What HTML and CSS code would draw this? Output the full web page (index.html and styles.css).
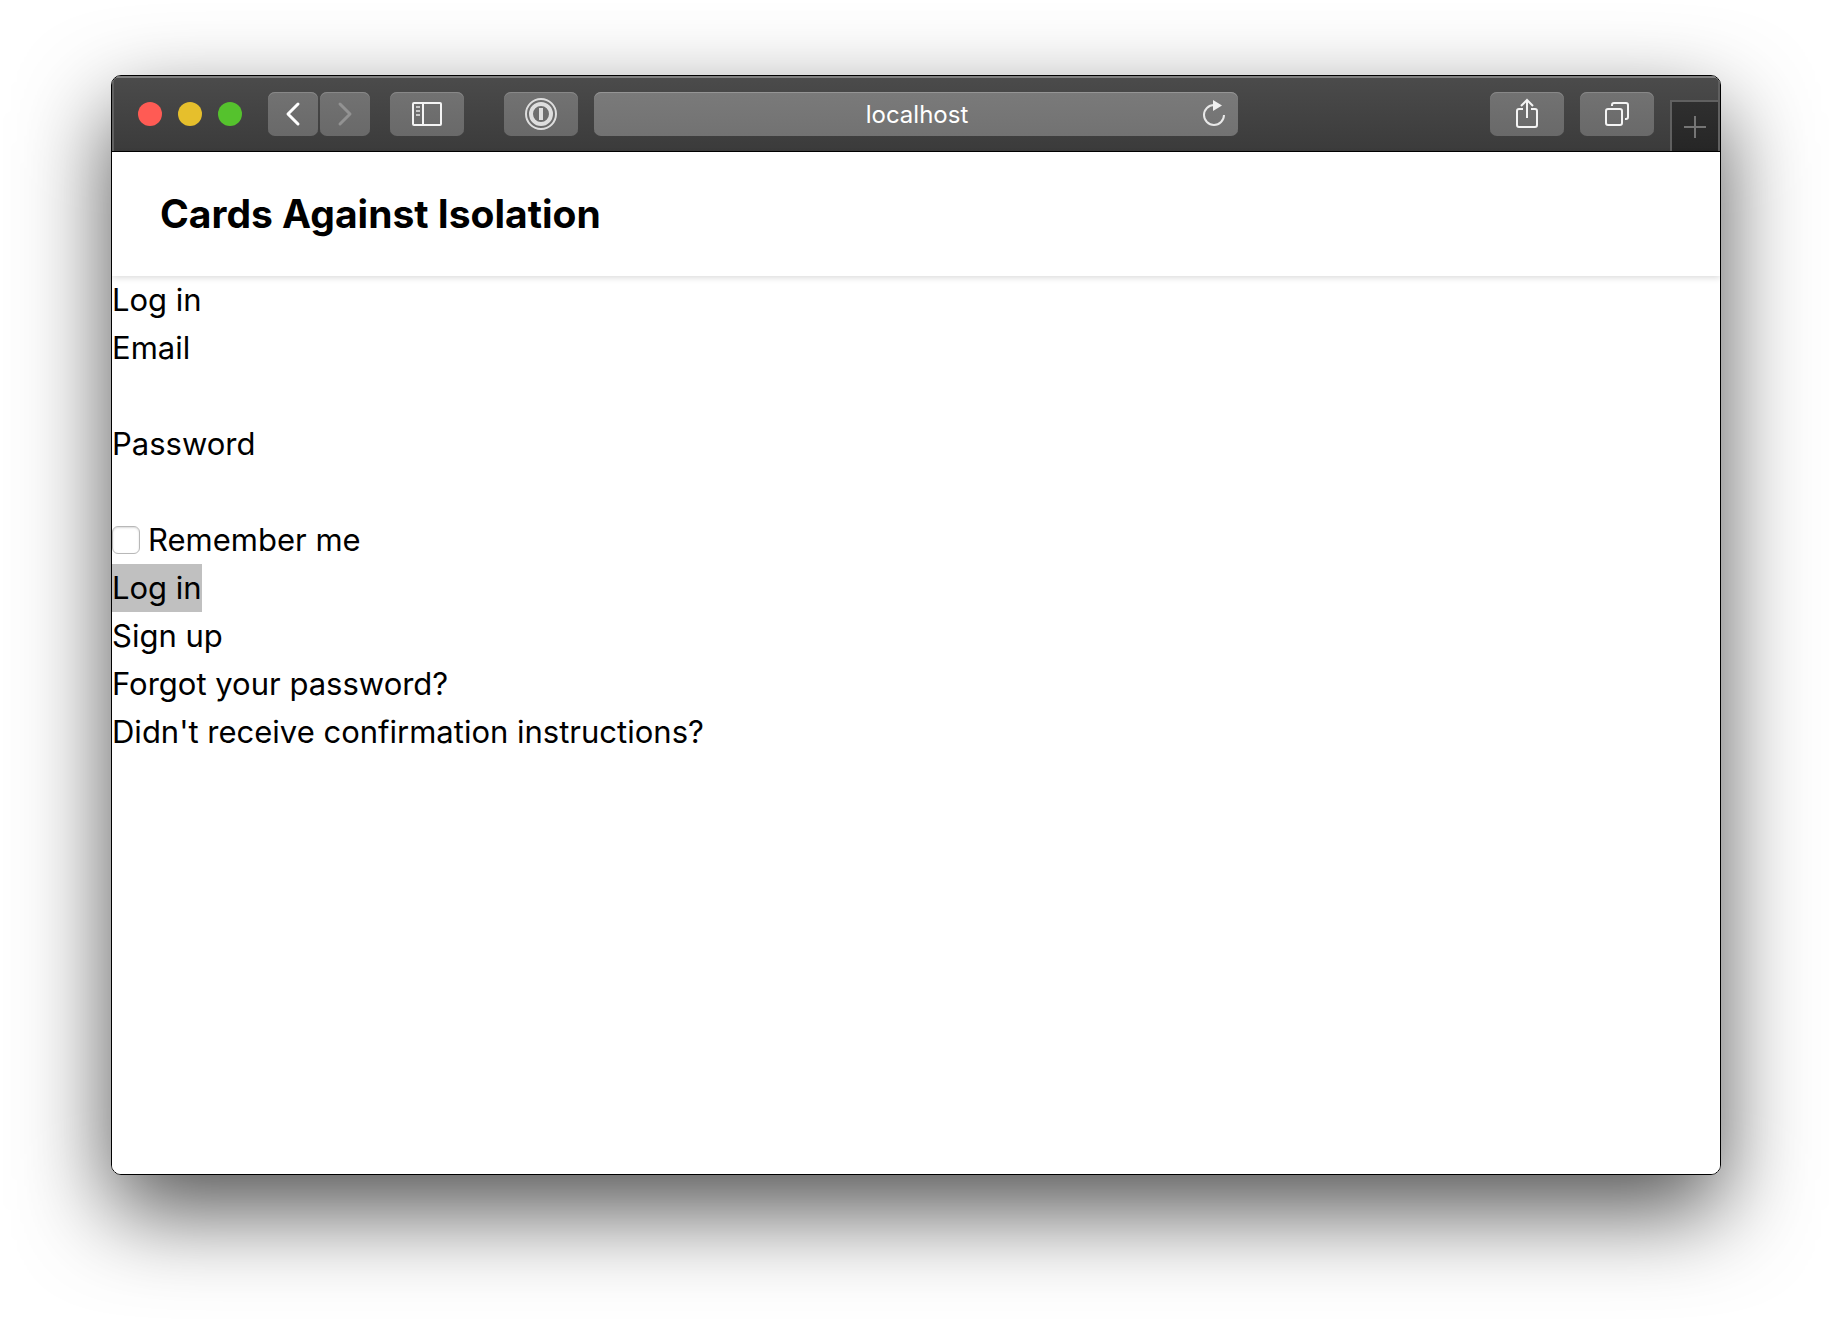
FILE: index.html
```html
<!DOCTYPE html>
<html lang="en">
<head>
    <meta charset="utf-8">
    <title>Cards Against Isolation</title>
    <link rel="stylesheet" href="styles.css">
</head>
<body>
<div class="window">
    <div class="toolbar">
        <div class="toolbar-left">
            <div class="lights">
                <span class="light light-red"></span>
                <span class="light light-yellow"></span>
                <span class="light light-green"></span>
            </div>
            <div class="nav">
                <button type="button" class="tool tool-small" aria-label="Back">
                    <svg width="16" height="26" viewBox="0 0 16 26"><path d="M13 3L3 13l10 10" fill="none" stroke="#fff" stroke-width="3" stroke-linecap="round" stroke-linejoin="round"/></svg>
                </button>
                <button type="button" class="tool tool-small" aria-label="Forward" disabled>
                    <svg width="16" height="26" viewBox="0 0 16 26"><path d="M3 3l10 10L3 23" fill="none" stroke="#929292" stroke-width="3" stroke-linecap="round" stroke-linejoin="round"/></svg>
                </button>
            </div>
            <button type="button" class="tool" aria-label="Sidebar">
                <svg width="30" height="24" viewBox="0 0 30 24">
                    <rect x="1" y="1" width="28" height="22" rx="1" fill="none" stroke="#f4f4f4" stroke-width="2"/>
                    <path d="M11 1v22" stroke="#f4f4f4" stroke-width="2"/>
                    <path d="M4 5h4M4 9h4M4 13h4" stroke="#c8c8c8" stroke-width="2"/>
                </svg>
            </button>
            <button type="button" class="tool tool-last" aria-label="Passwords">
                <svg width="32" height="32" viewBox="0 0 32 32">
                    <circle cx="16" cy="16" r="15" fill="none" stroke="#dedede" stroke-width="2"/>
                    <circle cx="16" cy="16" r="10" fill="none" stroke="#dedede" stroke-width="4"/>
                    <path d="M16 10v12" stroke="#dedede" stroke-width="4"/>
                </svg>
            </button>
        </div>

        <div class="address">
            <input type="text" class="address-input" value="localhost" aria-label="Address">
            <button type="button" class="reload" aria-label="Reload">
                <svg width="24" height="28" viewBox="0 0 24 28">
                    <path d="M12 5A10 10 0 1 0 22 15" fill="none" stroke="#e8e8e8" stroke-width="2"/>
                    <path d="M11 0l9 5.500-9 5.500z" fill="#f0f0f0"/>
                </svg>
            </button>
        </div>

        <div class="toolbar-right">
            <button type="button" class="tool" aria-label="Share">
                <svg width="22" height="32" viewBox="0 0 22 32" fill="none" stroke="#f4f4f4" stroke-width="2">
                    <path d="M7 11H3q-2 0-2 2v14q0 2 2 2h16q2 0 2-2V13q0-2-2-2h-4"/>
                    <path d="M11 20V2M5 8l6-6 6 6"/>
                </svg>
            </button>
            <button type="button" class="tool" aria-label="Show all tabs">
                <svg width="24" height="24" viewBox="0 0 24 24" fill="none" stroke="#f4f4f4" stroke-width="2">
                    <rect x="1" y="7" width="16" height="16" rx="2"/>
                    <path d="M7 4V3q0-2 2-2h12q2 0 2 2v12q0 2-2 2h-1"/>
                </svg>
            </button>
            <button type="button" class="new-tab" aria-label="New tab">
                <svg width="22" height="22" viewBox="0 0 22 22"><path d="M11 0v22M0 11h22" stroke="#757575" stroke-width="2"/></svg>
            </button>
        </div>
    </div>

    <div class="page">
        <header class="site-header">
            <h1>Cards Against Isolation</h1>
        </header>

        <h2>Log in</h2>

        <form class="login-form">
            <label for="email">Email</label>
            <input type="email" id="email" class="field">
            <label for="password">Password</label>
            <input type="password" id="password" class="field">
            <div class="remember">
                <input type="checkbox" id="remember">
                <label for="remember">Remember me</label>
            </div>
            <button type="submit" class="submit">Log in</button>
        </form>

        <nav class="links">
            <a href="#">Sign up</a>
            <a href="#">Forgot your password?</a>
            <a href="#">Didn't receive confirmation instructions?</a>
        </nav>
    </div>
</div>
</body>
</html>
```

FILE: styles.css
```css
* {
    box-sizing: border-box;
    margin: 0;
    padding: 0;
}

body {
    display: flex;
    min-height: 100vh;
    padding: 75px 111px 147px;
    background-color: #fff;
    color: #000;
    font-family: Inter, "Liberation Sans", sans-serif;
    font-size: 31px;
    line-height: 48px;
}

h1, h2, button, input {
    font: inherit;
    color: inherit;
}

button, input {
    border: none;
    background: none;
}

svg {
    display: block;
}

.window {
    flex: 1;
    display: flex;
    flex-direction: column;
    border: 1px solid #000;
    border-radius: 10px;
    overflow: hidden;
    box-shadow: 0 36px 90px rgba(0, 0, 0, 0.68);
}

/* browser toolbar */
.toolbar {
    display: grid;
    grid-template-columns: 3fr 4fr 3fr;
    align-items: center;
    height: 76px;
    border-bottom: 1px solid #000;
    background: linear-gradient(#4b4b4b, #3b3b3b);
    box-shadow: inset 0 2px #808080, inset 2px 0 #606060, inset -2px 0 #606060;
}

.toolbar-left {
    display: flex;
    align-items: center;
    padding-left: 26px;
}

.lights {
    display: flex;
    gap: 16px;
    margin-right: 26px;
}

.light {
    width: 24px;
    height: 24px;
    border-radius: 50%;
}
.light-red { background-color: #ff5b54; }
.light-yellow { background-color: #e6bf2c; }
.light-green { background-color: #55c22d; }

.nav {
    display: flex;
    gap: 2px;
    margin-right: 20px;
}

.tool {
    display: flex;
    align-items: center;
    justify-content: center;
    width: 74px;
    height: 44px;
    border-radius: 7px;
    background: linear-gradient(#727272, #696969);
    box-shadow: inset 0 1px #888;
}
.tool-small { width: 50px; }
.tool-last {
    margin-left: auto;
    margin-right: 16px;
}

.address {
    display: flex;
    align-items: center;
    height: 44px;
    padding: 0 12px;
    border-radius: 7px;
    background: linear-gradient(#7a7a7a, #727272);
    box-shadow: inset 0 1px #959595;
}

.address-input {
    flex: 1;
    min-width: 0;
    height: 44px;
    padding: 2px 0 0 26px;
    color: #fff;
    font-size: 24px;
    text-align: center;
}

.toolbar-right {
    display: flex;
    align-items: center;
    align-self: stretch;
    justify-content: flex-end;
    gap: 16px;
}

.new-tab {
    display: flex;
    align-items: center;
    justify-content: center;
    align-self: flex-end;
    width: 50px;
    height: 51px;
    border: 2px solid #606060;
    border-bottom: none;
    background: linear-gradient(#2f2f2f, #262626);
}

/* login page */
.page {
    flex: 1;
    background-color: #fff;
}

.site-header {
    padding: 38px 48px;
    box-shadow: 0 2px 6px rgba(0, 0, 0, 0.14);
}

h1 {
    font-size: 39px;
    font-weight: 700;
}

.login-form,
.links {
    display: flex;
    flex-direction: column;
    align-items: flex-start;
}

.field {
    width: 100%;
    height: 48px;
    outline: none;
}

.remember {
    display: flex;
    align-items: center;
    gap: 8px;
}
.remember input {
    appearance: none;
    width: 28px;
    height: 28px;
    border: 1px solid #b8b8b8;
    border-radius: 6px;
    box-shadow: inset 0 1px 2px rgba(0, 0, 0, 0.15);
}

.submit {
    background-color: #c0c0c0;
}

.links a {
    color: inherit;
    text-decoration: none;
}
```
